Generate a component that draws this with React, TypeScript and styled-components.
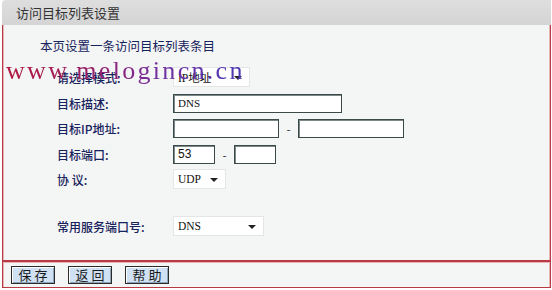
import * as React from 'react';
import styled, { createGlobalStyle } from 'styled-components';

const red = '#b83a44';
const pink = '#e7b4b8';
const panelBg = '#f4f5f5';
const navy = '#17235c';
const cjk = '"Noto Sans CJK SC", "Noto Sans", sans-serif';

const GlobalStyle = createGlobalStyle`
  html, body {
    margin: 0;
    padding: 0;
    background: #fff;
  }
`;

const Page = styled.div`
  position: relative;
  width: 552px;
  height: 290px;
  overflow: hidden;
  font-family: ${cjk};
`;

const Frame = styled.div`
  margin-left: 2px;
  width: 549px;
  display: flex;
  flex-direction: column;
`;

const Header = styled.div`
  height: 25px;
  line-height: 25px;
  padding-left: 14px;
  background: linear-gradient(#dedede, #d4d4d4);
  border-top-left-radius: 4px;
  color: #333;
  font-size: 13px;
`;

const Body = styled.div`
  height: 235px;
  box-sizing: border-box;
  padding: 13px 0 0 0;
  background: ${panelBg};
  border-left: 1px solid ${red};
  border-right: 1px solid ${red};
  box-shadow: inset 1px 0 0 ${pink}, inset -1px 0 0 ${pink};
  display: flex;
  flex-direction: column;
`;

const Intro = styled.div`
  height: 16px;
  line-height: 16px;
  padding-left: 37px;
  font-size: 12.5px;
  color: ${navy};
`;

const Row = styled.div<{ $h: number; $mt?: number }>`
  height: ${(p) => p.$h}px;
  margin-top: ${(p) => p.$mt || 0}px;
  display: flex;
  align-items: center;
`;

const Label = styled.div`
  width: 116px;
  padding-left: 54px;
  font-size: 12px;
  font-weight: 500;
  color: ${navy};
  white-space: pre;
`;

const TextBox = styled.div<{ $w: number; $mono?: boolean }>`
  width: ${(p) => p.$w}px;
  height: 19px;
  box-sizing: border-box;
  background: #fff;
  border: 1px solid #3b4949;
  box-shadow: inset 1px 1px 0 #7c8888;
  padding-left: 4px;
  display: flex;
  align-items: center;
  font-family: ${(p) => (p.$mono ? '"Liberation Serif", serif' : '"Liberation Sans", sans-serif')};
  font-size: ${(p) => (p.$mono ? 11 : 12)}px;
  color: #111;
`;

const Dash = styled.span`
  width: 19px;
  text-align: center;
  font-size: 12px;
  color: #333;
`;

const Select = styled.div<{ $w: number }>`
  width: ${(p) => p.$w}px;
  height: 20px;
  box-sizing: border-box;
  background: #fff;
  border: 1px solid #e4e6e6;
  padding: 0 7px 0 4px;
  display: flex;
  align-items: center;
  justify-content: space-between;
  font-family: "Liberation Serif", ${cjk};
  font-size: 11.5px;
  color: #111;
`;

const Arrow = styled.span`
  width: 0;
  height: 0;
  border-left: 4px solid transparent;
  border-right: 4px solid transparent;
  border-top: 4px solid #222;
  margin-top: 2px;
`;

const Footer = styled.div`
  height: 28px;
  box-sizing: border-box;
  background: ${panelBg};
  border: 1px solid ${red};
  border-top: 2px solid ${red};
  box-shadow: inset 0 1px 0 ${pink}, inset 1px 0 0 ${pink}, inset -1px 0 0 ${pink};
  display: flex;
  align-items: center;
  gap: 13px;
  padding-left: 8px;
`;

const Button = styled.button`
  width: 44px;
  height: 18px;
  padding: 0;
  margin: 0;
  background: #cfe1f3;
  border: 1px solid #2a2a2a;
  box-shadow: inset 1px 1px 0 #fff, inset -1px -1px 0 #8fa4b8;
  font-family: ${cjk};
  font-size: 13px;
  line-height: 16px;
  color: #1a1a1a;
  white-space: pre;
`;

const Watermark = styled.div`
  position: absolute;
  left: 6px;
  top: 58px;
  font-family: "Liberation Serif", serif;
  font-size: 26px;
  line-height: 26px;
  letter-spacing: 2.3px;
  white-space: nowrap;
  background: linear-gradient(90deg, #b0183f 0%, #9a1f66 35%, #7330a2 65%, #4a38b4 100%);
  -webkit-background-clip: text;
  background-clip: text;
  color: transparent;
  pointer-events: none;
`;

const SelectBox: React.FC<{ w: number; value: string }> = ({ w, value }) => (
  <Select $w={w}>
    <span>{value}</span>
    <Arrow />
  </Select>
);

const App: React.FC = () => (
  <Page>
    <GlobalStyle />
    <Frame>
      <Header>访问目标列表设置</Header>
      <Body>
        <Intro>本页设置一条访问目标列表条目</Intro>
        <Row $h={26} $mt={10}>
          <Label>请选择模式:</Label>
          <SelectBox w={77} value="IP地址" />
        </Row>
        <Row $h={26}>
          <Label>目标描述:</Label>
          <TextBox $w={169} $mono>DNS</TextBox>
        </Row>
        <Row $h={25}>
          <Label>目标IP地址:</Label>
          <TextBox $w={106} />
          <Dash>-</Dash>
          <TextBox $w={106} />
        </Row>
        <Row $h={26}>
          <Label>目标端口:</Label>
          <TextBox $w={42}>53</TextBox>
          <Dash>-</Dash>
          <TextBox $w={42} />
        </Row>
        <Row $h={24}>
          <Label>协 议:</Label>
          <SelectBox w={53} value="UDP" />
        </Row>
        <Row $h={26} $mt={22}>
          <Label>常用服务端口号:</Label>
          <SelectBox w={91} value="DNS" />
        </Row>
      </Body>
      <Footer>
        <Button>保 存</Button>
        <Button>返 回</Button>
        <Button>帮 助</Button>
      </Footer>
    </Frame>
    <Watermark>www.melogincn.cn</Watermark>
  </Page>
);

export default App;
